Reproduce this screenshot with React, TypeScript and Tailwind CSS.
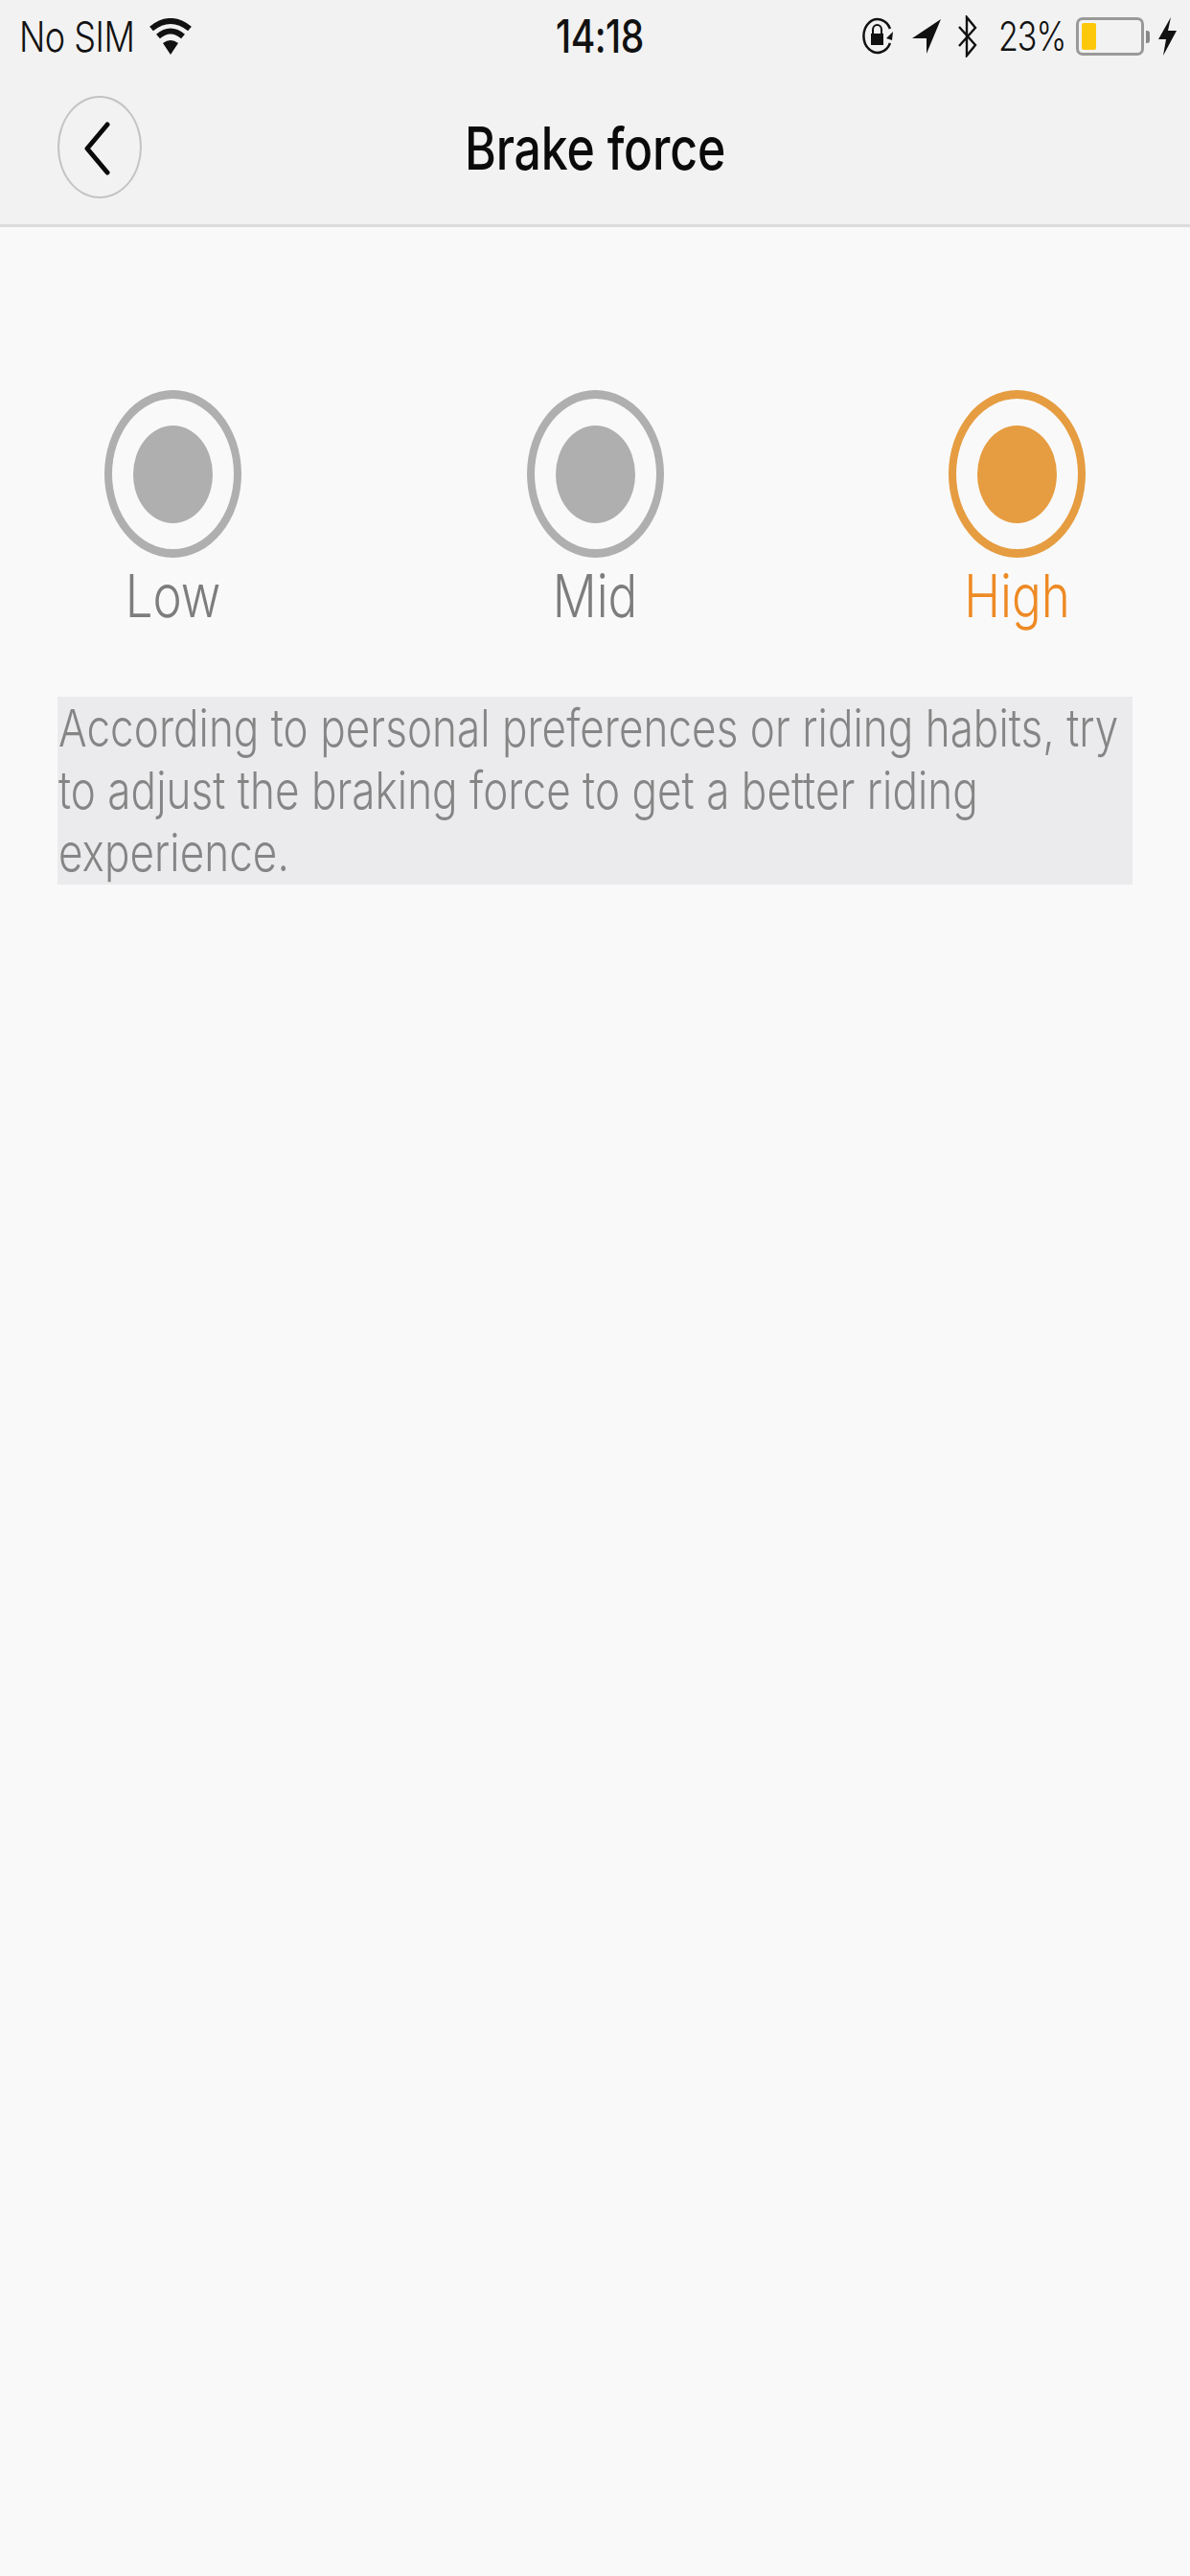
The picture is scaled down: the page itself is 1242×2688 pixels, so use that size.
import React from "react";

function Option({ label, active }: { label: string; active?: boolean }) {
  return (
    <div className="flex w-[143px] flex-col items-center">
      <div
        className={`flex h-[175px] w-[143px] items-center justify-center rounded-[50%] border-x-[8px] border-y-[9px] ${
          active ? "border-[#e69c40]" : "border-[#afafaf]"
        }`}
      >
        <div className={`h-[102px] w-[83px] rounded-[50%] ${active ? "bg-[#e69c40]" : "bg-[#afafaf]"}`} />
      </div>
      <div
        className={`mt-[10px] flex h-[60px] w-[200px] scale-y-[1.224] items-center justify-center text-[51px] leading-[60px] font-light ${
          active ? "text-[#ee8a24]" : "text-[#7d7d7d]"
        }`}
      >
        {label}
      </div>
    </div>
  );
}

export default function App() {
  return (
    <div className="flex h-[2688px] w-[1242px] flex-col overflow-hidden bg-[#f9f9f9] [font-family:Inter,sans-serif]">
      <header className="h-[237px] border-b-[3px] border-[#dcdcdc] bg-[#f2f2f2] pb-[4px]">
        <div className="flex h-[76px] items-center text-[#111]">
          <div className="flex w-[580px] items-center pl-[20px]">
            <span className="w-[124px] origin-left scale-y-[1.224] text-[36px] leading-[40px] font-light tracking-[-0.5px] whitespace-nowrap">
              No SIM
            </span>
            <svg width="44" height="38" viewBox="0 0 44 38" className="ml-[12px]">
              <path d="M22 38 L14 26 Q22 20 30 26 Z" fill="#111" />
              <path d="M2 11 Q22 -5 42 11" fill="none" stroke="#111" strokeWidth="6" />
              <path d="M9 19 Q22 8 35 19" fill="none" stroke="#111" strokeWidth="6" />
            </svg>
          </div>
          <span className="w-[92px] scale-y-[1.224] text-[39px] leading-[40px] font-medium tracking-[-0.5px] whitespace-nowrap">14:18</span>
          <div className="ml-[226px] flex items-center">
            <svg width="36" height="40" viewBox="0 0 36 40">
              <path d="M31 27 A14.5 17.5 0 1 1 31 12" fill="none" stroke="#111" strokeWidth="2.5" />
              <path d="M34 15 L27 22 L33 24 Z" fill="#111" />
              <path d="M13 17 V13 A4.5 5 0 0 1 22 13 V17" fill="none" stroke="#111" strokeWidth="2" />
              <rect x="11" y="17" width="13" height="12" fill="#111" />
            </svg>
            <svg width="30" height="36" viewBox="0 0 30 36" className="ml-[18px]">
              <path d="M30 0 L0 20 L15 20 L15 36 Z" fill="#111" />
            </svg>
            <svg width="22" height="44" viewBox="0 0 22 44" className="ml-[17px]">
              <path d="M2 12 L19 31 L10 42 V2 L19 13 L2 32" fill="none" stroke="#111" strokeWidth="2.4" />
            </svg>
            <span className="ml-[21px] w-[81px] origin-left scale-y-[1.224] text-[34px] leading-[40px] font-light tracking-[-1px] whitespace-nowrap">
              23%
            </span>
            <div className="flex h-[40px] w-[71px] items-center rounded-[7px] border-[3px] border-[#999] pl-[3px]">
              <div className="h-[28px] w-[15px] rounded-[2px] bg-[#fdc80a]" />
            </div>
            <div className="ml-[2px] h-[13px] w-[4px] rounded-r-[3px] bg-[#888]" />
            <svg width="19" height="40" viewBox="0 0 19 40" className="ml-[9px]">
              <path d="M13 0 L0 23 L8 23 L5 40 L19 14 L10 14 Z" fill="#111" />
            </svg>
          </div>
        </div>
        <div className="flex h-[154px] items-center pl-[60px]">
          <div className="flex h-[107px] w-[88px] items-center justify-center rounded-[50%] border-[2px] border-[#c4c4c4]">
            <svg width="30" height="56" viewBox="0 0 30 56" className="mt-[3px] mr-[7px]">
              <path d="M26 3 L5 28 L26 53" fill="none" stroke="#0a0a0a" strokeWidth="5" strokeLinecap="round" strokeLinejoin="round" />
            </svg>
          </div>
          <h1 className="mt-[3px] ml-[337px] origin-left scale-y-[1.224] text-[50px] leading-[60px] font-medium tracking-[-0.2px] whitespace-nowrap text-[#0a0a0a]">
            Brake force
          </h1>
        </div>
      </header>

      <main className="px-[60px] pt-[170px]">
        <div className="flex justify-between px-[49px]">
          <Option label="Low" />
          <Option label="Mid" />
          <Option label="High" active />
        </div>
        <div className="mt-[75px] h-[196px] bg-[#ebebed] pt-[1px] pl-[1px]">
          <p className="origin-top scale-y-[1.224] text-[44px] leading-[53px] font-[350] tracking-[0.05px] whitespace-pre-line text-[#858585]">
            {"According to personal preferences or riding habits, try\nto adjust the braking force to get a better riding\nexperience."}
          </p>
        </div>
      </main>
    </div>
  );
}
